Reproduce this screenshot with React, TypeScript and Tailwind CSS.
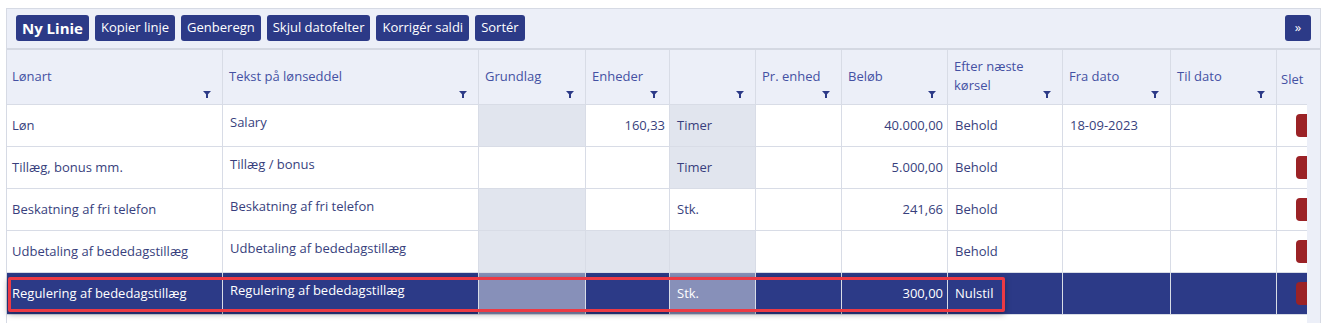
import type { ReactNode } from "react";

type Cell = {
  text?: string;
  align?: "left" | "right";
  muted?: boolean;
  bold?: boolean;
  lift?: boolean;
};

const COLS = [
  { label: "Lønart", w: "w-[216px]", filter: true },
  { label: "Tekst på lønseddel", w: "w-[256px]", filter: true },
  { label: "Grundlag", w: "w-[107px]", filter: true },
  { label: "Enheder", w: "w-[84px]", filter: true },
  { label: "", w: "w-[86px]", filter: true },
  { label: "Pr. enhed", w: "w-[86px]", filter: true },
  { label: "Beløb", w: "w-[106px]", filter: true },
  { label: "Efter næste\nkørsel", w: "w-[115px]", filter: true },
  { label: "Fra dato", w: "w-[108px]", filter: true },
  { label: "Til dato", w: "w-[106px]", filter: true },
  { label: "Slet", w: "w-[60px]", filter: false },
];

const ROWS: { cells: Cell[]; selected?: boolean }[] = [
  {
    cells: [
      { text: "Løn" },
      { text: "Salary", lift: true },
      { muted: true },
      { text: "160,33", align: "right" },
      { text: "Timer", muted: true },
      {},
      { text: "40.000,00", align: "right" },
      { text: "Behold" },
      { text: "18-09-2023" },
      {},
    ],
  },
  {
    cells: [
      { text: "Tillæg, bonus mm." },
      { text: "Tillæg / bonus", lift: true },
      {},
      {},
      { text: "Timer", muted: true },
      {},
      { text: "5.000,00", align: "right" },
      { text: "Behold" },
      {},
      {},
    ],
  },
  {
    cells: [
      { text: "Beskatning af fri telefon" },
      { text: "Beskatning af fri telefon", lift: true },
      { muted: true },
      {},
      { text: "Stk." },
      {},
      { text: "241,66", align: "right" },
      { text: "Behold" },
      {},
      {},
    ],
  },
  {
    cells: [
      { text: "Udbetaling af bededagstillæg" },
      { text: "Udbetaling af bededagstillæg", lift: true },
      { muted: true },
      { muted: true },
      { muted: true },
      {},
      {},
      { text: "Behold" },
      {},
      {},
    ],
  },
  {
    selected: true,
    cells: [
      { text: "Regulering af bededagstillæg" },
      { text: "Regulering af bededagstillæg", lift: true },
      { muted: true },
      {},
      { text: "Stk.", muted: true },
      {},
      { text: "300,00", align: "right" },
      { text: "Nulstil", bold: true },
      {},
      {},
    ],
  },
];

function FilterIcon() {
  return (
    <svg width="8" height="7" viewBox="0 0 8 7" className="absolute bottom-[6px] right-[11px]">
      <path d="M0 0h8L5 3.2V7H3V3.2z" fill="#2c3a87" />
    </svg>
  );
}

function Btn({ children, big }: { children: ReactNode; big?: boolean }) {
  return (
    <button
      type="button"
      className={`h-[26px] rounded-[3px] bg-[#2c3a87] text-white ${
        big ? "px-[6px] text-[15px] font-bold" : "px-[6px] text-[13px]"
      }`}
    >
      {children}
    </button>
  );
}

export default function App() {
  return (
    <div className="min-h-[323px] bg-white pt-[8px] font-['Open_Sans',sans-serif]">
      <div className="relative ml-[6px] w-[1315px] border-l border-r border-t border-[#d6dae4] bg-[#eceff8]">
        {/* toolbar */}
        <div className="flex items-center justify-between border-b-2 border-[#d4d8e2] pb-[7px] pl-[9px] pr-[9px] pt-[6px]">
          <div className="flex gap-[6px]">
            <Btn big>Ny Linie</Btn>
            <Btn>Kopier linje</Btn>
            <Btn>Genberegn</Btn>
            <Btn>Skjul datofelter</Btn>
            <Btn>Korrigér saldi</Btn>
            <Btn>Sortér</Btn>
          </div>
          <button
            type="button"
            className="flex h-[26px] w-[26px] items-center justify-center rounded-[3px] bg-[#2c3a87] text-[13px] text-white"
          >
            »
          </button>
        </div>

        <div className="flex">
          <div className="w-[1300px] overflow-hidden">
            {/* header */}
            <div className="flex w-max">
              {COLS.map((c, i) => (
                <div
                  key={i}
                  className={`relative flex h-[55px] shrink-0 items-center border-b border-r border-[#d8dce6] pb-[2px] ${
                    i === 0 ? "pl-[5px]" : i === 10 ? "pl-[4px]" : "pl-[6px]"
                  } pr-[12px] text-[13px] leading-[19px] text-[#4451a3] ${c.w}`}
                >
                  <span className={`whitespace-pre ${i === 10 ? "pt-[6px]" : ""}`}>{c.label}</span>
                  {c.filter && <FilterIcon />}
                </div>
              ))}
            </div>

            {/* rows */}
            {ROWS.map((r, ri) => (
              <div key={ri} className="flex w-max">
                {r.cells.map((cell, ci) => {
                  const bg = r.selected
                    ? cell.muted
                      ? "bg-[#8790b9]"
                      : "bg-[#2c3a87]"
                    : cell.muted
                      ? "bg-[#e1e5ee]"
                      : "bg-white";
                  const color = r.selected ? "text-white" : "text-[#383f7d]";
                  return (
                    <div
                      key={ci}
                      className={`flex h-[42px] shrink-0 items-center border-b border-r border-[#d8dce6] text-[13px] ${bg} ${color} ${
                        COLS[ci].w
                      } ${cell.align === "right" ? "justify-end pr-[4px]" : ci === 0 ? "pl-[5px]" : "pl-[7px]"} ${
                        cell.lift ? "pb-[5px] pl-[6px]" : ""
                      } ${cell.bold ? "font-medium" : ""}`}
                    >
                      {cell.text}
                    </div>
                  );
                })}
                <div
                  className={`flex h-[42px] w-[60px] shrink-0 items-center border-b border-[#d8dce6] pl-[19px] ${
                    r.selected ? "bg-[#2c3a87]" : "bg-white"
                  }`}
                >
                  <div className="h-[23px] w-[30px] rounded-[4px] bg-[#9b2226]" />
                </div>
              </div>
            ))}
            <div className="h-[20px] bg-white" />
          </div>
          <div className="flex-1 bg-[#eceff8]" />
        </div>

        {/* annotation highlight */}
        <div className="pointer-events-none absolute left-[1px] top-[268px] h-[35px] w-[997px] rounded-[2px] border-[3px] border-[#ec3a44] shadow-[0_2px_6px_rgba(0,0,0,0.35)]" />
      </div>
    </div>
  );
}
